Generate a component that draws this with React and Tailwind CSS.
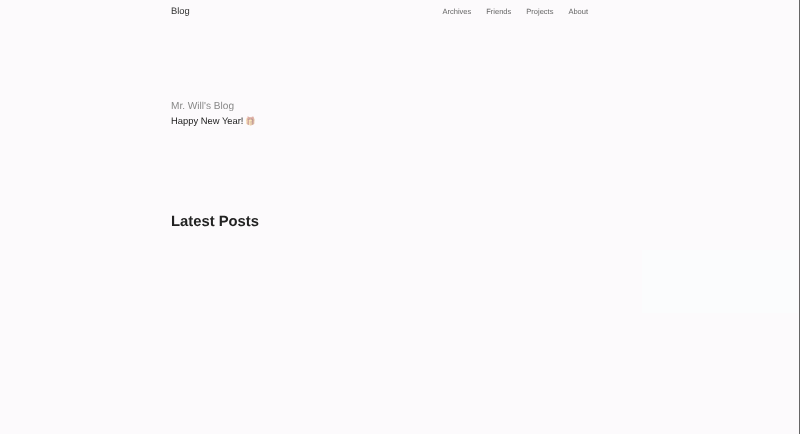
export default function App() {
  return (
    <div className="relative h-[434px] w-[800px] overflow-hidden bg-[#fcfafc] font-['Liberation_Sans',sans-serif] blur-[0.3px] [text-rendering:geometricPrecision]">
      <header className="ml-[171px] flex h-[23px] w-[417px] items-center justify-between">
        <a className="text-[9.4px] text-[#333]">Blog</a>
        <nav className="flex gap-[15px] text-[7.5px] text-[#666]">
          <a>Archives</a>
          <a>Friends</a>
          <a>Projects</a>
          <a>About</a>
        </nav>
      </header>
      <main className="ml-[171px]">
        <section className="mt-[77px]">
          <h1 className="text-[10.1px] leading-[14px] font-light text-[#888]">Mr. Will's Blog</h1>
          <p className="text-[9.4px] leading-[13px] text-[#222]">
            Happy New Year!<span className="ml-[2px] text-[8.5px] opacity-50 sepia-[60%]">🎁</span>
          </p>
        </section>
        <h2 className="mt-[84px] text-[14.8px] leading-[20px] font-bold text-[#222]">Latest Posts</h2>
      </main>
      <div className="absolute left-[642px] top-[250px] h-[63px] w-[156px] bg-[#fbfcfd]" />
      <div className="absolute right-0 top-0 h-full w-px bg-[#666]" />
    </div>
  );
}
